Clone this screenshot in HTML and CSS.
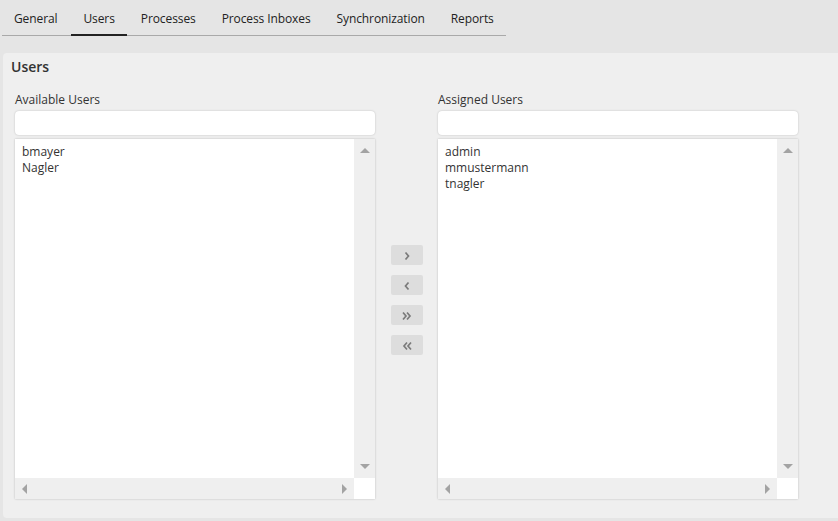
FILE: index.html
```html
<!DOCTYPE html>
<html>
<head>
<meta charset="utf-8">
<link rel="stylesheet" href="styles.css">
</head>
<body>
<div class="tabs">
  <div class="tab">General</div>
  <div class="tab active">Users</div>
  <div class="tab">Processes</div>
  <div class="tab">Process Inboxes</div>
  <div class="tab">Synchronization</div>
  <div class="tab">Reports</div>
</div>
<div class="panel">
  <div class="title">Users</div>
  <div class="columns">
    <div class="col">
      <div class="label">Available Users</div>
      <div class="search"></div>
      <div class="list">
        <div class="items">
          <div>bmayer</div>
          <div>Nagler</div>
        </div>
        <div class="vbar"><span class="up"></span><span class="down"></span></div>
        <div class="hbar"><span class="left"></span><span class="right"></span></div>
        <div class="corner"></div>
      </div>
    </div>
    <div class="mid">
      <div class="btn"><svg width="10" height="10" viewBox="0 0 10 10"><polyline points="3.5,1.5 6.5,5 3.5,8.5" fill="none" stroke="#7a7a7a" stroke-width="1.7"/></svg></div>
      <div class="btn"><svg width="10" height="10" viewBox="0 0 10 10"><polyline points="6.5,1.5 3.5,5 6.5,8.5" fill="none" stroke="#7a7a7a" stroke-width="1.7"/></svg></div>
      <div class="btn"><svg width="12" height="10" viewBox="0 0 12 10"><polyline points="2,1.5 5,5 2,8.5" fill="none" stroke="#7a7a7a" stroke-width="1.7"/><polyline points="6,1.5 9,5 6,8.5" fill="none" stroke="#7a7a7a" stroke-width="1.7"/></svg></div>
      <div class="btn"><svg width="12" height="10" viewBox="0 0 12 10"><polyline points="6,1.5 3,5 6,8.5" fill="none" stroke="#7a7a7a" stroke-width="1.7"/><polyline points="10,1.5 7,5 10,8.5" fill="none" stroke="#7a7a7a" stroke-width="1.7"/></svg></div>
    </div>
    <div class="col">
      <div class="label">Assigned Users</div>
      <div class="search"></div>
      <div class="list">
        <div class="items">
          <div>admin</div>
          <div>mmustermann</div>
          <div>tnagler</div>
        </div>
        <div class="vbar"><span class="up"></span><span class="down"></span></div>
        <div class="hbar"><span class="left"></span><span class="right"></span></div>
        <div class="corner"></div>
      </div>
    </div>
  </div>
</div>
</body>
</html>
```
FILE: styles.css
```css
* { box-sizing: border-box; }
html, body { margin: 0; padding: 0; }
body {
  background: #e5e5e5;
  font-family: "Open Sans", "Liberation Sans", sans-serif;
  color: #333;
  width: 838px;
  height: 521px;
  overflow: hidden;
}
.tabs {
  display: flex;
  gap: 2px;
  width: 504px;
  margin-left: 2px;
  height: 36px;
  border-bottom: 1px solid #a9a9a9;
}
.tab {
  flex: 0 0 auto;
  white-space: nowrap;
  height: 36px;
  margin-bottom: -1px;
  padding: 11px 12px 0;
  font-size: 12px;
  line-height: 16px;
  color: #222;
  letter-spacing: -0.1px;
}
.tab.active { border-bottom: 2px solid #222; }
.panel {
  margin: 17px 0 0 3px;
  height: 465px;
  background: #efefef;
  border-radius: 4px 0 0 4px;
  padding: 4px 8px 0;
}
.title {
  font-size: 14px;
  font-weight: 600;
  line-height: 20px;
  color: #333;
}
.columns {
  display: flex;
  margin: 13px 0 0 4px;
}
.col { width: 360px; }
.label {
  font-size: 12px;
  line-height: 16px;
  padding-top: 2px;
  margin-bottom: 3px;
  color: #333;
}
.search {
  height: 24px;
  background: #fff;
  border-radius: 4px;
  box-shadow: 0 0 2px rgba(0,0,0,0.22);
  margin-bottom: 4px;
}
.list {
  height: 360px;
  background: #fff;
  box-shadow: 0 0 2px rgba(0,0,0,0.22);
  display: grid;
  grid-template-columns: 1fr 21px;
  grid-template-rows: 1fr 21px;
}
.items {
  padding: 5px 7px;
  font-size: 12px;
  line-height: 16px;
  color: #333;
}
.vbar {
  background: #efefef;
  position: relative;
}
.hbar {
  background: #efefef;
  position: relative;
}
.corner { background: #fff; }
.up, .down, .left, .right {
  position: absolute;
  width: 0; height: 0;
  border: 5px solid transparent;
}
.up { border-bottom-color: #a3a3a3; border-top-width: 0; top: 9px; left: 6px; }
.down { border-top-color: #a3a3a3; border-bottom-width: 0; bottom: 9px; left: 6px; }
.left { border-right-color: #a3a3a3; border-left-width: 0; left: 7px; top: 6px; }
.right { border-left-color: #a3a3a3; border-right-width: 0; right: 7px; top: 6px; }
.mid {
  width: 63px;
  display: flex;
  flex-direction: column;
  align-items: center;
  gap: 10px;
  padding-top: 155px;
}
.btn {
  width: 32px;
  height: 20px;
  background: #dddddd;
  border-radius: 2px;
  display: flex;
  align-items: center;
  justify-content: center;
}
.btn svg { display: block; margin-top: 2px; }
```
